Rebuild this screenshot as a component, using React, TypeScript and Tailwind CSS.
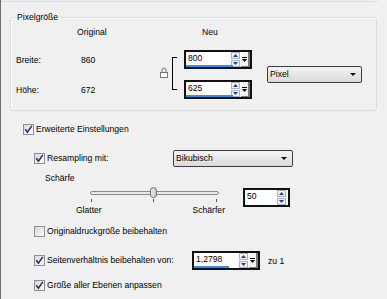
import React from "react";

function Check({ checked }: { checked: boolean }) {
  return (
    <span className="w-[11px] h-[11px] border border-[#8e8f8f] bg-linear-to-br from-[#d9d9d9] to-[#fbfbfb] flex items-center justify-center shrink-0">
      {checked && (
        <svg width="9" height="9" viewBox="0 0 9 9">
          <path d="M1.3 4.3 L3.4 7.2 L7.8 0.8" stroke="#1f2f6a" strokeWidth="1.5" fill="none" />
        </svg>
      )}
    </span>
  );
}

function Arrows() {
  return (
    <div className="flex flex-col justify-center gap-px w-[9px] shrink-0">
      <div className="h-[7px] border border-[#a8b3c2] bg-[#eef1f5] flex items-center justify-center">
        <svg width="5" height="3" viewBox="0 0 5 3">
          <path d="M0 3 L2.5 0 L5 3Z" fill="#2a3c86" />
        </svg>
      </div>
      <div className="h-[7px] border border-[#a8b3c2] bg-[#eef1f5] flex items-center justify-center">
        <svg width="5" height="3" viewBox="0 0 5 3">
          <path d="M0 0 L2.5 3 L5 0Z" fill="#2a3c86" />
        </svg>
      </div>
    </div>
  );
}

function Spin({ value, bar, w }: { value: string; bar?: number; w: number }) {
  return (
    <div
      className="h-[19px] border-2 border-[#111] bg-white flex shrink-0"
      style={{ width: w }}
    >
      <div className="flex-1 relative">
        <span className="absolute left-[2px] top-[1px] leading-[11px]">{value}</span>
        {bar !== undefined && (
          <div className="absolute left-0 bottom-0 h-[2px] bg-[#3a8ae6]" style={{ width: bar }} />
        )}
      </div>
      <Arrows />
      {bar !== undefined ? (
        <div className="w-[9px] ml-[1px] bg-[#f4f4f4] border-r-2 border-b border-[#7a7a7a] flex flex-col items-center justify-center gap-[1px]">
          <div className="w-[5px] h-px bg-black" />
          <svg width="5" height="3" viewBox="0 0 5 3">
            <path d="M0 0 L2.5 3 L5 0Z" fill="#000" />
          </svg>
        </div>
      ) : (
        <div className="w-[2px]" />
      )}
    </div>
  );
}

function Select({ label, w }: { label: string; w: number }) {
  return (
    <div
      className="h-[17px] border border-[#3d3d3d] rounded-[2px] bg-linear-to-b from-[#f4f4f4] to-[#dadada] flex items-center justify-between pl-[2px] pr-[5px] shrink-0"
      style={{ width: w }}
    >
      <span className="leading-[11px]">{label}</span>
      <svg width="6" height="3" viewBox="0 0 6 3">
        <path d="M0 0 L3 3 L6 0Z" fill="#111" />
      </svg>
    </div>
  );
}

export default function App() {
  return (
    <div className="w-[387px] h-[299px] bg-[#f0f0f0] border-l border-[#6f6f6f] overflow-hidden text-[8.6px] leading-[11px] text-black font-['Liberation_Sans',Arial,sans-serif]">
      {/* Ende der vorherigen Gruppe */}
      <div className="h-[2px] w-[376px] border-b border-r border-[#d5dfe5] rounded-br-[3px]" />

      {/* Pixelgröße */}
      <div className="relative ml-[9px] mt-[15px] w-[367px] h-[94px] border border-[#d5dfe5] rounded-[3px] shadow-[inset_1px_1px_0_#fff]">
        <span className="absolute left-[4px] top-[-6px] px-[2px] bg-[#f0f0f0]">Pixelgröße</span>
        <div className="flex">
          <div className="w-[66px] pl-[5px] flex flex-col">
            <span className="mt-[37px]">Breite:</span>
            <span className="mt-[19px]">Höhe:</span>
          </div>
          <div className="w-[83px] flex flex-col">
            <span className="mt-[9px]">Original</span>
            <span className="mt-[17px] pl-[4px]">860</span>
            <span className="mt-[19px] pl-[4px]">672</span>
          </div>
          <div className="w-[12px]">
            <svg className="mt-[49px]" width="8" height="11" viewBox="0 0 8 11">
              <path d="M2 5 V3 a2 2 0 0 1 4 0 V5" stroke="#777" strokeWidth="1" fill="none" />
              <rect x="0.5" y="5.5" width="7" height="5" fill="#fff" stroke="#777" />
            </svg>
          </div>
          <div className="w-[12px]">
            <div className="mt-[39px] w-[5px] h-[33px] border-l border-t border-b border-black" />
          </div>
          <div className="w-[68px] flex flex-col">
            <span className="mt-[9px] pl-[18px]">Neu</span>
            <div className="mt-[12px]">
              <Spin value="800" bar={47} w={68} />
            </div>
            <div className="mt-[11px]">
              <Spin value="625" bar={47} w={68} />
            </div>
          </div>
          <div className="ml-[15px] mt-[48px]">
            <Select label="Pixel" w={95} />
          </div>
        </div>
      </div>

      {/* Erweiterte Einstellungen */}
      <div className="mt-[12px] ml-[22px] h-[13px] flex items-center gap-[2px]">
        <Check checked />
        <span>Erweiterte Einstellungen</span>
      </div>

      <div className="mt-[14px] ml-[33px] h-[16px] flex items-center">
        <div className="w-[139px] flex items-center gap-[2px]">
          <Check checked />
          <span>Resampling mit:</span>
        </div>
        <Select label="Bikubisch" w={120} />
      </div>

      <div className="mt-[7px] ml-[44px]">Schärfe</div>

      <div className="mt-[3px] flex">
        <div className="ml-[70px] w-[160px] flex flex-col">
          <div className="relative ml-[19px] w-[129px] h-[17px]">
            <div className="absolute left-0 right-0 top-[4px] h-[4px] rounded-full border border-[#8a8a8a] bg-[#e9e9e9]" />
            <div className="absolute left-[60px] top-0 w-[7px] h-[11px] rounded-full border border-[#6d6d6d] bg-linear-to-r from-[#e4e8ee] to-[#c9d0da]" />
            <div className="absolute left-[1px] top-[12px] w-px h-[3px] bg-[#555]" />
            <div className="absolute left-[63px] top-[12px] w-px h-[3px] bg-[#555]" />
            <div className="absolute left-[126px] top-[12px] w-px h-[3px] bg-[#555]" />
          </div>
          <div className="mt-px flex">
            <span className="ml-0 w-[40px] text-center">Glatter</span>
            <span className="ml-[80px] w-[50px] text-center">Schärfer</span>
          </div>
        </div>
        <div className="ml-[12px] mt-px">
          <Spin value="50" w={47} />
        </div>
      </div>

      <div className="mt-[9px] ml-[33px] h-[13px] flex items-center gap-[2px]">
        <Check checked={false} />
        <span>Originaldruckgröße beibehalten</span>
      </div>

      <div className="mt-[13px] ml-[33px] h-[19px] flex items-center">
        <div className="w-[158px] flex items-center gap-[2px]">
          <Check checked />
          <span>Seitenverhältnis beibehalten von:</span>
        </div>
        <Spin value="1,2798" bar={35} w={68} />
        <span className="ml-[8px] mt-[2px]">zu 1</span>
      </div>

      <div className="mt-[9px] ml-[33px] h-[13px] flex items-center gap-[2px]">
        <Check checked />
        <span>Größe aller Ebenen anpassen</span>
      </div>
    </div>
  );
}
